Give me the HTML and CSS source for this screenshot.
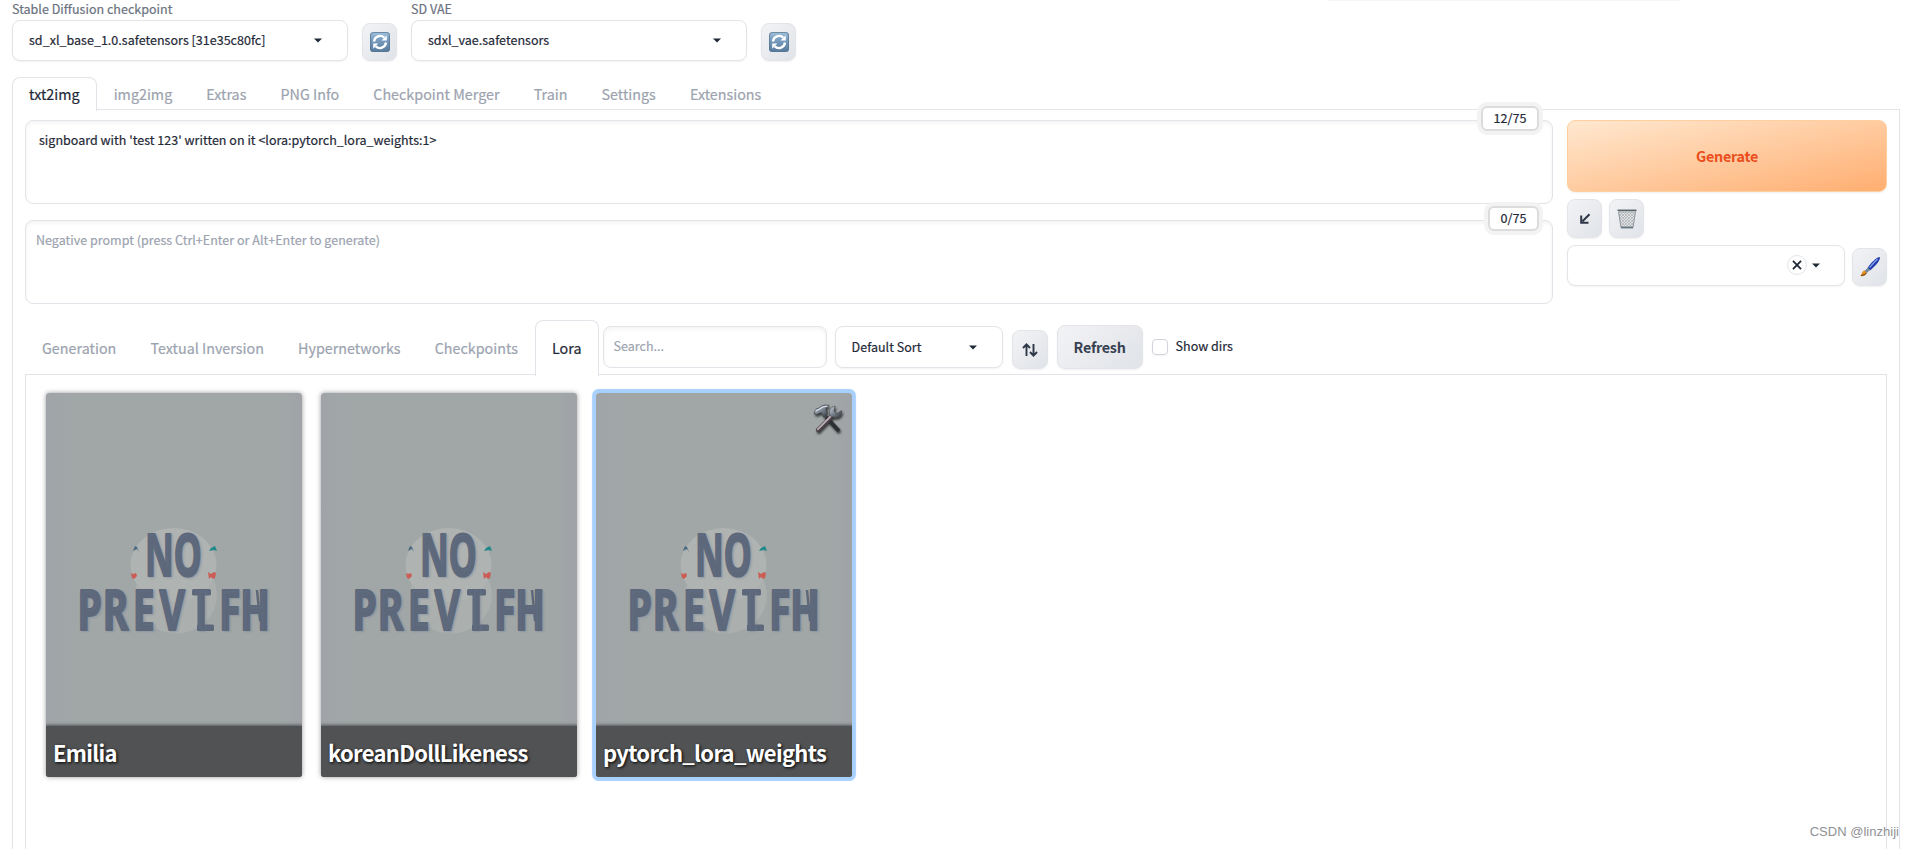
FILE: index.html
```html
<!DOCTYPE html>
<html lang="en">
<head>
<meta charset="utf-8">
<title>Stable Diffusion</title>
<link rel="stylesheet" href="styles.css">
</head>
<body>
<svg class="defs" width="0" height="0" aria-hidden="true">
  <defs>
    <linearGradient id="blueKey" x1="0" y1="0" x2="0" y2="1"><stop offset="0" stop-color="#a5c3dc"/><stop offset=".3" stop-color="#7fa3c4"/><stop offset="1" stop-color="#54799b"/></linearGradient>
    <linearGradient id="metal" x1="0" y1="0" x2="1" y2="1"><stop offset="0" stop-color="#d5dbe4"/><stop offset=".5" stop-color="#77808c"/><stop offset="1" stop-color="#34373b"/></linearGradient>
    <linearGradient id="cardBg" x1="0" y1="0" x2="1" y2="0"><stop offset="0" stop-color="#a0a4a8"/><stop offset=".13" stop-color="#a1a7a7"/><stop offset=".9" stop-color="#a1a7a7"/><stop offset="1" stop-color="#a0a3a7"/></linearGradient>
    <pattern id="mesh" width="3" height="3" patternUnits="userSpaceOnUse"><path d="M0 0l3 3M3 0L0 3" stroke="#9da2a6" stroke-width=".6"/></pattern>
  </defs>
  <symbol id="caret" viewBox="0 0 18 18"><path d="M5 7.500l4 4 4-4z"/></symbol>
  <symbol id="reload" viewBox="0 0 20 20">
    <rect width="20" height="20" rx="3.5" fill="url(#blueKey)"/>
    <rect x=".4" y=".4" width="19.2" height="19.2" rx="3.2" fill="none" stroke="#557590" stroke-width=".8"/>
    <path d="M4 9.500A6.200 6.200 0 0 1 14.300 5.600M16 10.500A6.200 6.200 0 0 1 5.700 14.400" fill="none" stroke="#fff" stroke-width="2.300"/>
    <path d="M16.800 3.300v5.200h-5.200zM3.200 16.700v-5.200h5.200z" fill="#fff"/>
  </symbol>
  <symbol id="backdrop" viewBox="0 0 256 384">
    <rect width="256" height="384" fill="url(#cardBg)"/>
    <ellipse cx="130" cy="202" rx="41" ry="38.500" fill="#abb0af"/>
    <ellipse cx="127.500" cy="172" rx="43" ry="37" fill="#afb3b2"/>
    <path d="M87 158l2-5 2 1 2 5-2-3-2 1z" fill="#496a83"/>
    <path d="M163 158l2-3 4-2 2 5-3-1z" fill="#20888b"/>
    <path d="M85 180l2 1 3-1 1 3-3 3-2-1z" fill="#cb5d54"/>
    <path d="M162 179l3 2 3-2 2 1-1 5-2 1-2-2-2 2z" fill="#cb5d54"/>
    <path d="M211 197l3 30h4l2-30" fill="none" stroke="#5d687b" stroke-width="2.500"/>
    <rect x="146" y="196" width="19" height="6.500" rx="1.500" fill="#5d687b"/>
    <rect x="151" y="231.500" width="17" height="6.500" rx="1.500" fill="#5d687b"/>
  </symbol>
</svg>
<div class="app">
  <header class="quick">
    <div class="field"><label class="label">Stable Diffusion checkpoint</label>
      <div class="select"><span>sd_xl_base_1.0.safetensors [31e35c80fc]</span><svg class="caret"><use href="#caret"/></svg></div></div>
    <button class="tool"><svg class="emoji"><use href="#reload"/></svg></button>
    <div class="field"><label class="label">SD VAE</label>
      <div class="select"><span>sdxl_vae.safetensors</span><svg class="caret"><use href="#caret"/></svg></div></div>
    <button class="tool"><svg class="emoji"><use href="#reload"/></svg></button>
  </header>
  <nav class="tabs">
    <span class="tab active">txt2img</span><span class="tab">img2img</span><span class="tab">Extras</span><span class="tab">PNG Info</span><span class="tab">Checkpoint Merger</span><span class="tab">Train</span><span class="tab">Settings</span><span class="tab">Extensions</span>
  </nav>
  <main class="panel">
    <section class="top">
      <div class="prompts">
        <div class="prompt">signboard with 'test 123' written on it &lt;lora:pytorch_lora_weights:1&gt;<span class="counter">12/75</span></div>
        <div class="prompt negative">Negative prompt (press Ctrl+Enter or Alt+Enter to generate)<span class="counter">0/75</span></div>
      </div>
      <div class="actions">
        <button class="generate">Generate</button>
        <div class="tools">
          <button class="tool tall"><svg class="emoji" viewBox="0 0 20 20"><path d="M14.500 5.200L7.500 12.200M6.200 6.400v7.300h7.300" fill="none" stroke="#2d3747" stroke-width="2"/></svg></button>
          <button class="tool tall"><svg class="emoji" viewBox="0 0 20 20"><path d="M1.500 2h17l-2.500 17H4z" fill="#e2e4e5"/><path d="M1.500 2h17l-2.500 17H4z" fill="url(#mesh)"/><path d="M1.500 2.500L4 18.500M18.500 2.500L16 18.500" stroke="#8d969d"/><path d="M.5 1.300h19" stroke="#59636b" stroke-width="1.500"/><path d="M2 3h16" stroke="#aeb5b9"/><path d="M4 18.500h12" stroke="#667582" stroke-width="1.800"/></svg></button>
        </div>
        <div class="styles">
          <div class="select style-select"><span class="clear"><svg viewBox="0 0 20 20"><path d="M5.500 5.500l9 9M14.500 5.500l-9 9" stroke="#1f2937" stroke-width="2"/></svg></span><svg class="caret"><use href="#caret"/></svg></div>
          <button class="tool"><svg class="emoji" viewBox="0 0 20 20"><path d="M19.500.5c-3 .2-8.500 5.500-11.500 10.500l2 2C15 9 19.500 4 19.500.5z" fill="#1c36a8" stroke="#1c36a8" stroke-width=".8"/><path d="M17.500 2L9.500 10.500" stroke="#8ba5ef" stroke-width="1.200"/><path d="M8 10.500L4.500 14l2 2 3.700-3z" fill="#6f8799"/><path d="M4.500 13.500c-2.500.8-2 3-4.200 5.500 2.700.6 5.700-.5 6.500-3z" fill="#e58b1f"/><path d="M1 18.500l4-.8 1.500-2" fill="none" stroke="#66401c"/></svg></button>
        </div>
      </div>
    </section>
    <nav class="tabs subtabs">
      <span class="tab">Generation</span><span class="tab">Textual Inversion</span><span class="tab">Hypernetworks</span><span class="tab">Checkpoints</span><span class="tab active">Lora</span>
      <div class="controls">
        <div class="search">Search...</div>
        <div class="select sort"><span>Default Sort</span><svg class="caret"><use href="#caret"/></svg></div>
        <button class="tool order"><svg viewBox="0 0 18 18"><path d="M5.500 15V3.500M2 7l3.500-3.700L9 7M12.500 3v11.500M9 11l3.500 3.700L16 11" fill="none" stroke="#2d3747" stroke-width="1.900"/></svg></button>
        <button class="refresh">Refresh</button>
        <span class="check"></span><span class="dirs">Show dirs</span>
      </div>
    </nav>
    <section class="cards">
      <article class="card">
        <svg class="art" viewBox="0 0 256 384"><use href="#backdrop"/><text class="no" transform="scale(.6 1)" x="165 213" y="183">NO</text><text class="prev" transform="scale(.7 1)" x="45 81 124 162 213.500 247 277" y="237">PREV<tspan class="thin">I</tspan>FH</text></svg>
        <div class="name">Emilia</div></article>
      <article class="card">
        <svg class="art" viewBox="0 0 256 384"><use href="#backdrop"/><text class="no" transform="scale(.6 1)" x="165 213" y="183">NO</text><text class="prev" transform="scale(.7 1)" x="45 81 124 162 213.500 247 277" y="237">PREV<tspan class="thin">I</tspan>FH</text></svg>
        <div class="name">koreanDollLikeness</div></article>
      <article class="card selected">
        <svg class="art" viewBox="0 0 256 384"><use href="#backdrop"/><text class="no" transform="scale(.6 1)" x="165 213" y="183">NO</text><text class="prev" transform="scale(.7 1)" x="45 81 124 162 213.500 247 277" y="237">PREV<tspan class="thin">I</tspan>FH</text></svg>
        <svg class="wrench" viewBox="0 0 30 30"><path d="M26 27L13 13" stroke="#2c2f33" stroke-width="4"/><path d="M5 26L19 12" stroke="#4a3f44" stroke-width="4.200" stroke-linecap="round"/><path d="M4.800 25.300L18 12" stroke="#b9adb4" stroke-width="1.800" stroke-linecap="round"/><path d="M17.500 12c-2.500-4-.5-9 4.500-10l-1 5 3 2.500 4.500-3c1 4-3 8.500-8 6.500z" fill="url(#metal)" stroke="#4a5058" stroke-width=".7"/><path d="M1 9.500l2-4.500 3-1c3-3 7-3.500 10-2.500l-3 3 1 5-3 3.500-3-4.500-4 2z" fill="url(#metal)" stroke="#3b4148" stroke-width=".7"/><path d="M2.500 7l4-2c3-2.500 5-3 8-2.700" fill="none" stroke="#dce5ed" stroke-width="1.200"/></svg>
        <div class="name">pytorch_lora_weights</div></article>
    </section>
  </main>
</div>
<div class="edge-shade"></div>
<div class="watermark">CSDN @linzhiji</div>
</body>
</html>
```
FILE: styles.css
```css
* { box-sizing: border-box; }
html, body { height: 100%; overflow: hidden; }
body { margin: 0; background: #fff; color: #1f2937; font: 400 12.5px/20px "Noto Sans CJK SC", "Open Sans", sans-serif; letter-spacing: .02px; -webkit-text-stroke: .2px; }
button { padding: 0; font-family: inherit; color: #374151; display: flex; align-items: center; justify-content: center; border: 1px solid #e2e4e9; border-radius: 8px; background: linear-gradient(135deg, #f2f3f5, #e0e3e8); box-shadow: 0 1px 2px rgba(0,0,0,.06); flex: none; -webkit-text-stroke: 0; }
.defs { position: absolute; }
.app { height: 849px; padding: 0 14px 0 12px; display: flex; flex-direction: column; }
.quick { display: flex; gap: 14px; align-items: flex-end; height: 61px; flex: none; }
.field { width: 336px; }
.label { display: block; color: #6b7280; line-height: 20px; height: 21px; }
.select { display: flex; align-items: center; justify-content: space-between; height: 41px; border: 1px solid #e2e4e9; border-radius: 8px; background: #fff; padding: 0 20px 1px 16px; box-shadow: 0 1px 2px rgba(0,0,0,.05); white-space: nowrap; }
.caret { width: 18px; height: 18px; fill: #1f2937; flex: none; }
.tool { width: 35px; height: 38px; }
.tall { height: 39px; }
.emoji { width: 20px; height: 20px; }
.tabs { display: flex; flex: none; height: 33px; margin-top: 16px; position: relative; z-index: 1; margin-bottom: -1px; }
.tab { padding: 0 16.1px 0 16px; border: 1px solid transparent; border-bottom: 0; line-height: 32px; font-size: 14.3px; color: #9ca3af; white-space: nowrap; }
.tab.active { color: #1f2937; background: #fff; border-color: #e2e4e9; border-radius: 8px 8px 0 0; height: 34px; }
.panel { border: 1px solid #e2e4e9; border-bottom: 0; flex: 1; padding: 10px 12px 0; display: flex; flex-direction: column; min-height: 0; }
.top { display: flex; gap: 14px; flex: none; }
.prompts { flex: 1; display: flex; flex-direction: column; gap: 16px; }
.prompt { position: relative; height: 84px; border: 1px solid #e2e4e9; border-radius: 8px; padding: 9px 13px; box-shadow: inset 0 2px 4px rgba(0,0,0,.05); }
.negative { color: #9ca3af; padding-left: 10px; }
.counter { position: absolute; right: 13px; top: -15px; height: 25px; padding: 0 10.5px; border: 2px solid #dcdcde; border-radius: 6px; box-shadow: 0 0 0 4px #f3f3f3; background: #fff; color: #1f2937; line-height: 20px; font-size: 12.6px; }
.actions { width: 320px; }
.generate { width: 320px; height: 72px; border-color: #fed0a0; background: linear-gradient(to bottom right, #ffe8d0, #ffae70); color: #ea4e1c; font-size: 14.3px; font-weight: 700; letter-spacing: -.25px; padding-bottom: 1px; }
.tools { display: flex; gap: 7px; margin: 7px 0; }
.styles { display: flex; gap: 7px; align-items: flex-end; }
.style-select { width: 278px; justify-content: flex-end; gap: 0; padding-right: 19px; }
.clear { width: 20px; height: 20px; border: 1px solid #e2e4e9; border-radius: 50%; display: flex; }
.clear svg { width: 18px; height: 18px; }
.subtabs { height: 55px; }
.subtabs .tab { line-height: 54px; }
.subtabs .active { height: 56px; }
.controls { display: flex; margin-left: 4px; padding-top: 5px; align-items: flex-start; }
.search { width: 224px; height: 42px; border: 1px solid #e2e4e9; border-radius: 8px; padding: 0 10px; line-height: 38px; color: #9ca3af; box-shadow: inset 0 2px 4px rgba(0,0,0,.05); margin-top: 1px; }
.sort { width: 168px; height: 42px; margin: 1px 9px 0 8px; }
.order { width: 36px; height: 39px; margin: 5px 9px 0 0; }
.order svg { width: 18px; height: 18px; }
.refresh { width: 86px; height: 44px; font-size: 14.3px; font-weight: 700; letter-spacing: -.25px; margin-right: 9px; padding-bottom: 1px; }
.check { width: 16px; height: 16px; border: 1px solid #d1d5db; border-radius: 4px; box-shadow: 0 1px 2px rgba(0,0,0,.05); margin: 14px 8px 0 0; }
.dirs { margin-top: 11px; }
.cards { flex: 1; border: 1px solid #e2e4e9; border-bottom: 0; display: flex; gap: 19px; padding: 18px 20px 0; align-items: flex-start; }
.card { position: relative; width: 256px; height: 384px; border-radius: 3px; overflow: hidden; box-shadow: 0 0 5px rgba(0,0,0,.4); flex: none; }
.selected { box-shadow: 0 0 1px 3.5px #a8d0ff; }
.art { display: block; width: 256px; height: 384px; }
.art text { font-family: "Noto Sans", sans-serif; font-weight: 700; fill: #5d687b; stroke: #5d687b; stroke-width: 2; stroke-linejoin: round; -webkit-text-stroke: 2px #5d687b; text-shadow: 2px 1px 2px rgba(110,122,150,.3); }
.art .no { font-size: 59px; }
.art .prev { font-size: 56px; }
.art .thin { font-family: "Liberation Sans", sans-serif; font-size: 58px; }
.name { position: absolute; left: 0; right: 0; bottom: 0; height: 51px; padding: 0 7px; line-height: 52px; background: #505254; box-shadow: 0 0 3px 1px #505254; color: #fff; font-size: 22px; letter-spacing: -.7px; font-weight: 700; -webkit-text-stroke: 0; text-shadow: 1px 1px 3px #000; white-space: nowrap; }
.wrench { position: absolute; right: 9px; top: 11px; width: 30px; height: 30px; filter: drop-shadow(1px 2px 1px rgba(0,0,0,.65)); }
.watermark { position: absolute; right: 15px; bottom: 8px; font: 13px/18px "Liberation Sans", sans-serif; color: #909194; -webkit-text-stroke: 0; }
.edge-shade { position: absolute; left: 1328px; top: 0; width: 352px; height: 1px; background: #f5f5f5; }
```
